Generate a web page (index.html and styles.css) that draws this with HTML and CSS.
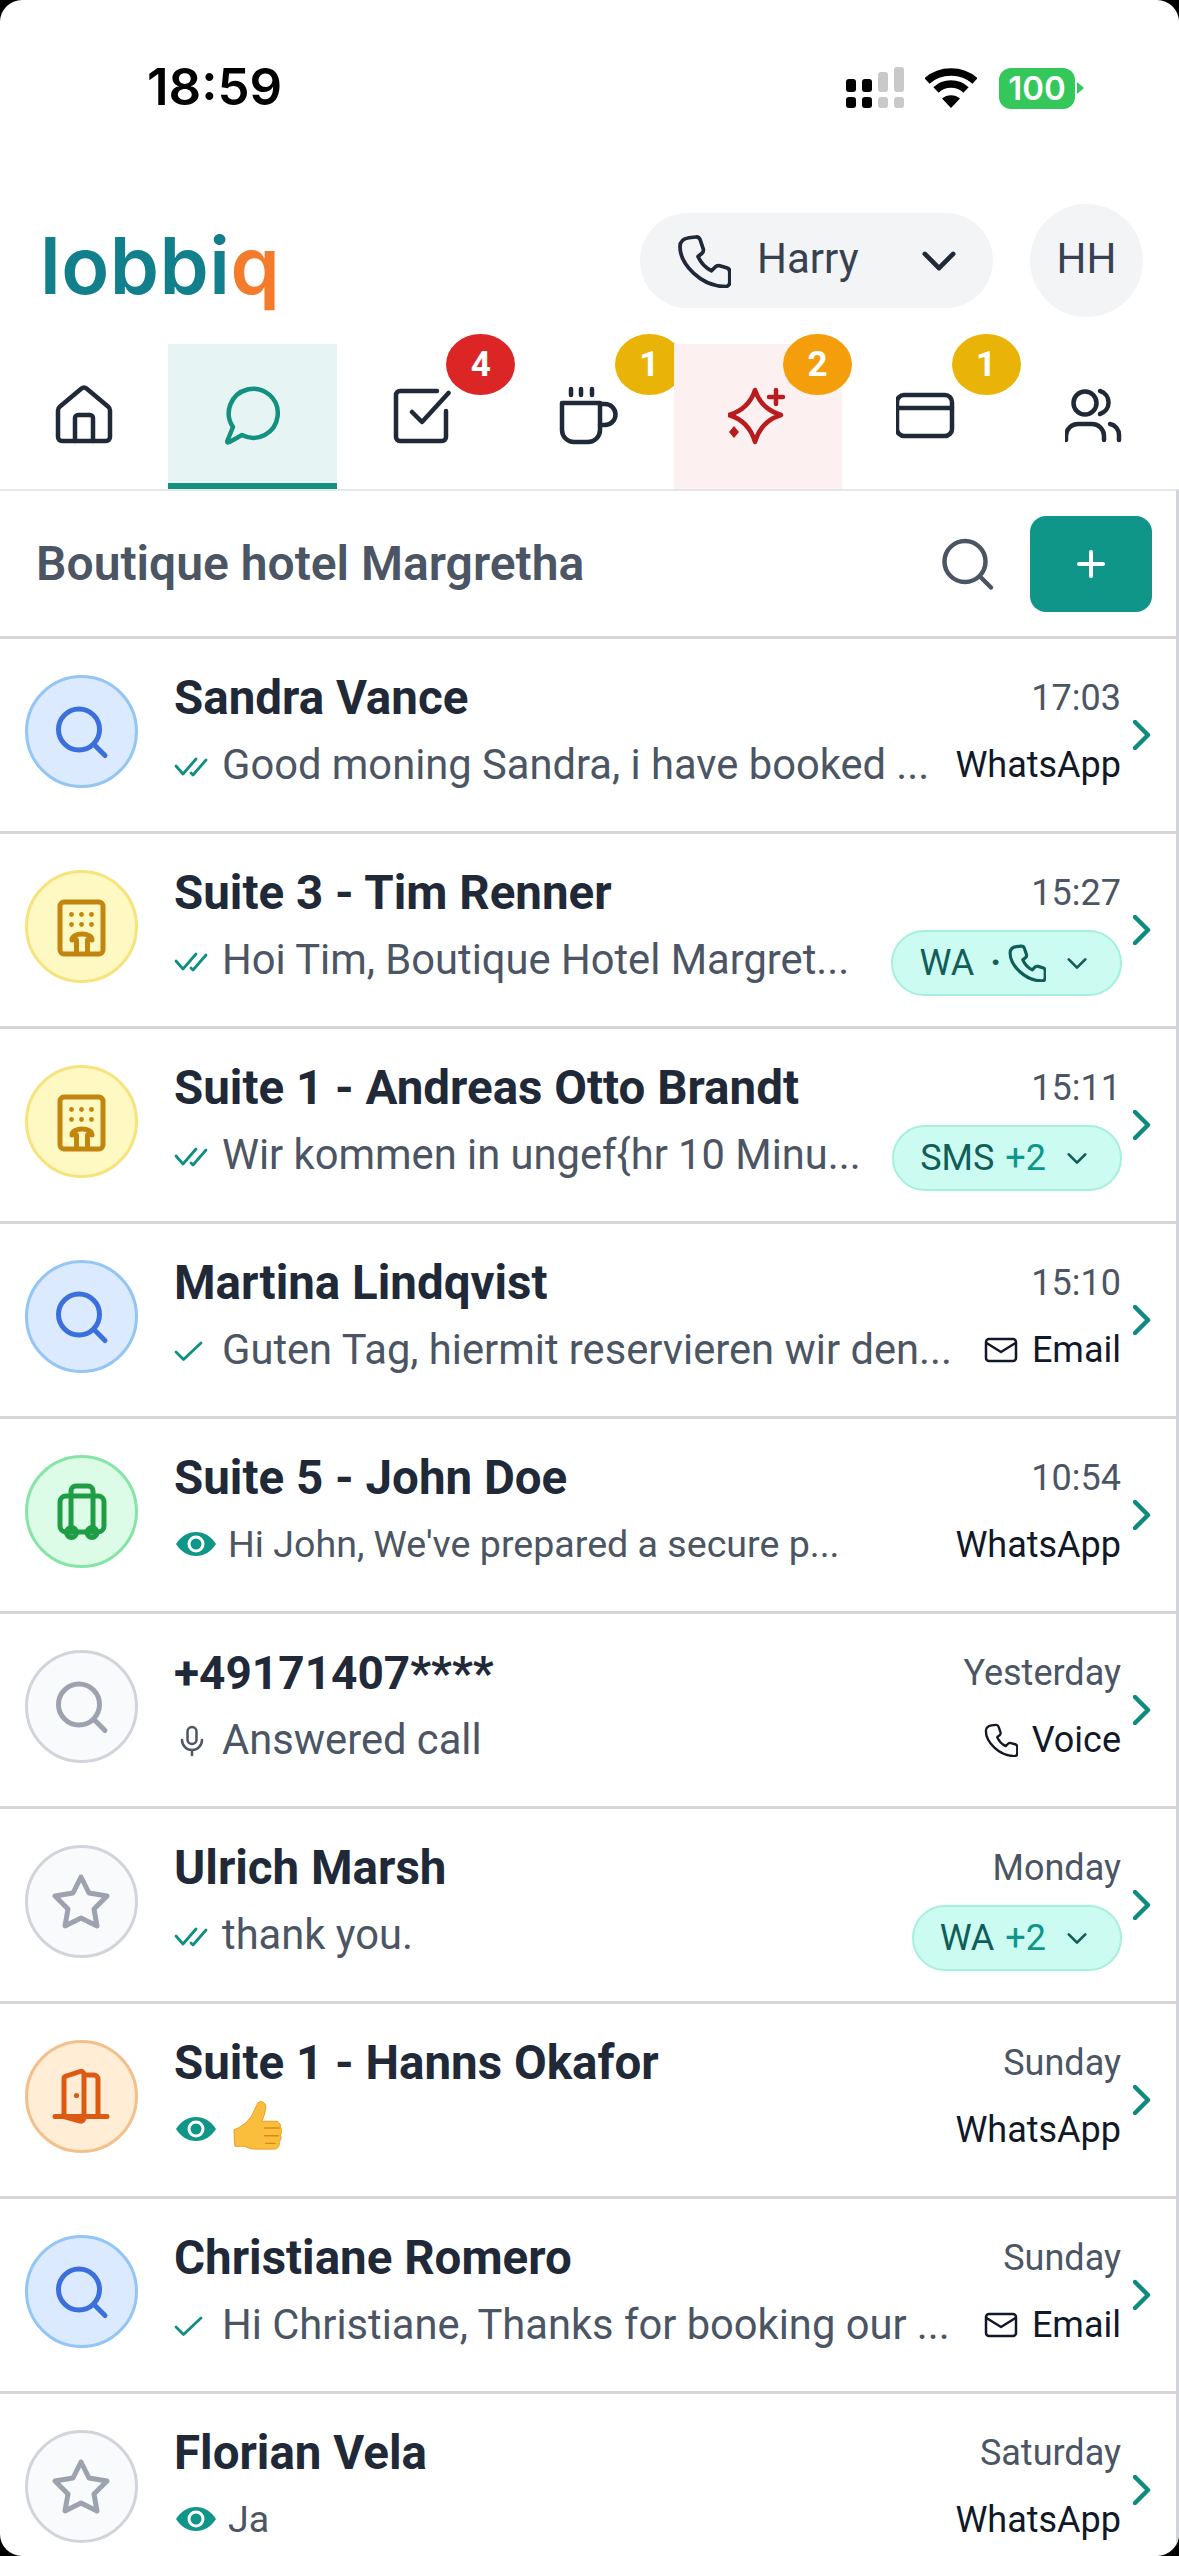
FILE: index.html
```html
<!DOCTYPE html>
<html lang="en">
<head>
<meta charset="utf-8">
<title>lobbiq</title>
<link rel="stylesheet" href="styles.css">
</head>
<body>
<svg class="sprite" xmlns="http://www.w3.org/2000/svg">
  <symbol id="i-search" viewBox="0 0 60 60"><circle cx="27" cy="27.500" r="20.500"/><path d="M42 42.500 53 53.500"/></symbol>
  <symbol id="i-building" viewBox="0 0 60 60"><rect x="8" y="5" width="43" height="52" rx="4"/><path d="M20 43a10 6 0 0 1 20 0M24.500 43V56M35.500 43V56"/><circle class="dot" cx="19.500" cy="17.500" r="2.400"/><circle class="dot" cx="29.500" cy="17.500" r="2.400"/><circle class="dot" cx="39.500" cy="17.500" r="2.400"/><circle class="dot" cx="19.500" cy="27.500" r="2.400"/><circle class="dot" cx="29.500" cy="27.500" r="2.400"/><circle class="dot" cx="39.500" cy="27.500" r="2.400"/></symbol>
  <symbol id="i-case" viewBox="0 0 60 60"><rect x="8" y="14" width="44" height="36" rx="6"/><path d="M19 50V9a5 5 0 0 1 5-5h12a5 5 0 0 1 5 5v41"/><circle cx="19.500" cy="50.500" r="5"/><circle cx="40" cy="50.500" r="5"/></symbol>
  <symbol id="i-star" viewBox="0 0 60 60"><path d="M29 5 37 21 55 24 42 37 45 54 29 46 13 54 16 37 3 24 21 21Z"/></symbol>
  <symbol id="i-door" viewBox="0 0 60 60"><path d="M3 49.500H55M12 49.500V12a3 3 0 0 1 2.500-3L28 4.500a3 3 0 0 1 4 3V51a3 3 0 0 1-4 3L12 49.500M32 8H42a4 4 0 0 1 4 4V49.500"/><circle class="dot" cx="24.500" cy="28.500" r="2.600"/></symbol>
  <symbol id="i-double" viewBox="0 0 34 24"><path d="M2 12 9 20 22 5"/><path d="M17 19 19 21 32 6"/></symbol>
  <symbol id="i-single" viewBox="0 0 30 24"><path d="M2 13 9.500 20.500 27 4"/></symbol>
  <symbol id="i-eye" viewBox="0 0 40 26"><path class="solid" d="M0 13C5 5 12 1 20 1s15 4 20 12c-5 8-12 12-20 12S5 21 0 13Z"/><circle class="ring" cx="20" cy="13" r="7"/></symbol>
  <symbol id="i-mic" viewBox="0 0 26 32"><rect x="8.500" y="2" width="9" height="17" rx="4.500"/><path d="M3 15a10 10 0 0 0 20 0M13 25V30"/></symbol>
  <symbol id="i-phone" viewBox="0 0 36 36"><path d="M8 2.500 12.500 2a3 3 0 0 1 3 2l2 6a3 3 0 0 1-1 3l-2.500 2c2 4.500 5 7.500 9 9.500l2.500-2.500a3 3 0 0 1 3-.8l4.500 1.300a3 3 0 0 1 2.200 3V32a3 3 0 0 1-3 3C16 35 2 20 2 8.500 2 5 4 3 8 2.500Z"/></symbol>
  <symbol id="i-mail" viewBox="0 0 34 28"><rect x="2" y="3" width="30" height="22" rx="3"/><path d="M2.500 7 17 16 31.500 7"/></symbol>
  <symbol id="i-chev" viewBox="0 0 24 14"><path d="M3 2.500 12 11.500 21 2.500"/></symbol>
</svg>

<main class="screen">
  <header class="status">
    <span class="clock">18:59</span>
    <div class="status-icons">
      <svg class="signal" viewBox="0 0 58 42" width="58" height="42">
        <rect x="0" y="12" width="10" height="13" rx="3"/><rect x="16" y="12" width="10" height="13" rx="3"/>
        <rect x="0" y="30" width="10" height="11" rx="3"/><rect x="16" y="30" width="10" height="11" rx="3"/>
        <rect class="off" x="32" y="5" width="10" height="20" rx="3"/><rect class="off" x="48" y="0" width="10" height="25" rx="3"/>
        <rect class="off" x="32" y="30" width="10" height="11" rx="3"/><rect class="off" x="48" y="30" width="10" height="11" rx="3"/>
      </svg>
      <svg class="wifi" viewBox="0 0 52 42" width="52" height="42">
        <path d="M2 14C15 2 37 2 50 14"/><path d="M11 23C19 15 33 15 41 23"/>
        <path class="wifi-dot" d="M26 41 17 31.500C22 27 30 27 35 31.500Z"/>
      </svg>
      <div class="battery"><span class="battery-body">100</span><span class="battery-nub"></span></div>
    </div>
  </header>

  <div class="topbar">
    <div class="logo">lobbi<span class="logo-q">q</span></div>
    <div class="top-actions">
      <button class="caller">
        <svg class="caller-phone" width="54" height="54"><use href="#i-phone"/></svg>
        <span class="caller-name">Harry</span>
        <svg class="caller-chev" width="38" height="22"><use href="#i-chev"/></svg>
      </button>
      <div class="me">HH</div>
    </div>
  </div>

  <nav class="tabs">
    <div class="tab">
      <svg class="tab-icon" viewBox="0 0 60 60"><path d="M27.500 3.500a4 4 0 0 1 5 0L54 21.500a5 5 0 0 1 2 4V52a4 4 0 0 1-4 4H8a4 4 0 0 1-4-4V25.500a5 5 0 0 1 2-4Z"/><path d="M21 56V33a3 3 0 0 1 3-3H36a3 3 0 0 1 3 3V56"/></svg>
    </div>
    <div class="tab tab-active">
      <svg class="tab-icon" viewBox="0 0 60 60"><path d="M19 50A24.500 24.500 0 1 0 10 42L4.500 55.500Q3.500 58 6 57.200Z"/></svg>
    </div>
    <div class="tab">
      <svg class="tab-icon" viewBox="0 0 60 60"><path d="M46 6H9a4 4 0 0 0-4 4V52a4 4 0 0 0 4 4H51a4 4 0 0 0 4-4V26"/><path d="M21 27 31 37 57.500 8"/></svg>
      <span class="badge badge-red">4</span>
    </div>
    <div class="tab">
      <svg class="tab-icon" viewBox="2 0 60 60"><path d="M5 18H43V45a12 12 0 0 1-12 12H17A12 12 0 0 1 5 45Z"/><path d="M43 19h5a10.500 10.500 0 0 1 0 21h-5"/><path d="M14 4v6M24 4v6M35 4v6"/></svg>
      <span class="badge badge-yellow">1</span>
    </div>
    <div class="tab tab-ai">
      <svg class="tab-icon" viewBox="4 0 60 60"><path d="M31 5Q37 24 57 30 37 36 31 57 25 36 5 30 25 24 31 5Z"/><path d="M52 5V19M45 12H59"/><path class="diamond" d="M10 41 15 47 10 53 5 47Z"/></svg>
      <span class="badge badge-orange">2</span>
    </div>
    <div class="tab">
      <svg class="tab-icon" viewBox="2 0 60 60"><rect x="3" y="10" width="55" height="41" rx="7"/><path d="M3 23H58"/></svg>
      <span class="badge badge-yellow">1</span>
    </div>
    <div class="tab">
      <svg class="tab-icon" viewBox="3 0 60 60"><circle cx="23" cy="18" r="11.500"/><path d="M38 6a12 12 0 0 1 0 23"/><path d="M4 55V51A12 12 0 0 1 16 39H30A12 12 0 0 1 42 51V55"/><path d="M48 39a11 11 0 0 1 9 11V55"/></svg>
    </div>
  </nav>

  <section class="panel">
    <div class="toolbar">
      <h1 class="hotel">Boutique hotel Margretha</h1>
      <svg class="tool-search" width="60" height="60"><use href="#i-search"/></svg>
      <button class="add"><svg viewBox="0 0 30 30" width="30" height="30"><path d="M15 3V27M3 15H27"/></svg></button>
    </div>

    <ul class="list">
      <li class="row">
        <div class="avatar av-blue"><svg width="60" height="60"><use href="#i-search"/></svg></div>
        <div class="body">
          <div class="name">Sandra Vance</div>
          <div class="msg"><svg class="tick" width="34" height="24"><use href="#i-double"/></svg><span>Good moning Sandra, i have booked ...</span></div>
        </div>
        <div class="meta"><div class="when">17:03</div><div class="chan">WhatsApp</div></div>
        <svg class="more" viewBox="0 0 18 30" width="18" height="30"><path d="M2 2 15 15 2 28"/></svg>
      </li>
      <li class="row">
        <div class="avatar av-yellow"><svg width="60" height="60"><use href="#i-building"/></svg></div>
        <div class="body">
          <div class="name">Suite 3 - Tim Renner</div>
          <div class="msg"><svg class="tick" width="34" height="24"><use href="#i-double"/></svg><span>Hoi Tim, Boutique Hotel Margret...</span></div>
        </div>
        <div class="meta"><div class="when">15:27</div>
          <div class="pill">WA<span class="pill-dot">·</span><svg class="pill-phone" width="38" height="38"><use href="#i-phone"/></svg><svg class="pill-chev" width="22" height="13"><use href="#i-chev"/></svg></div>
        </div>
        <svg class="more" viewBox="0 0 18 30" width="18" height="30"><path d="M2 2 15 15 2 28"/></svg>
      </li>
      <li class="row">
        <div class="avatar av-yellow"><svg width="60" height="60"><use href="#i-building"/></svg></div>
        <div class="body">
          <div class="name">Suite 1 - Andreas Otto Brandt</div>
          <div class="msg"><svg class="tick" width="34" height="24"><use href="#i-double"/></svg><span>Wir kommen in ungef{hr 10 Minu...</span></div>
        </div>
        <div class="meta"><div class="when">15:11</div>
          <div class="pill">SMS<span class="pill-more">+2</span><svg class="pill-chev" width="22" height="13"><use href="#i-chev"/></svg></div>
        </div>
        <svg class="more" viewBox="0 0 18 30" width="18" height="30"><path d="M2 2 15 15 2 28"/></svg>
      </li>
      <li class="row">
        <div class="avatar av-blue"><svg width="60" height="60"><use href="#i-search"/></svg></div>
        <div class="body">
          <div class="name">Martina Lindqvist</div>
          <div class="msg"><svg class="tick tick-one" width="30" height="24"><use href="#i-single"/></svg><span>Guten Tag, hiermit reservieren wir den...</span></div>
        </div>
        <div class="meta"><div class="when">15:10</div><div class="chan"><svg class="chan-icon" width="34" height="28"><use href="#i-mail"/></svg>Email</div></div>
        <svg class="more" viewBox="0 0 18 30" width="18" height="30"><path d="M2 2 15 15 2 28"/></svg>
      </li>
      <li class="row">
        <div class="avatar av-green"><svg width="60" height="60"><use href="#i-case"/></svg></div>
        <div class="body">
          <div class="name">Suite 5 - John Doe</div>
          <div class="msg msg-seen"><svg class="eye" width="40" height="26"><use href="#i-eye"/></svg><span>Hi John, We've prepared a secure p...</span></div>
        </div>
        <div class="meta"><div class="when">10:54</div><div class="chan">WhatsApp</div></div>
        <svg class="more" viewBox="0 0 18 30" width="18" height="30"><path d="M2 2 15 15 2 28"/></svg>
      </li>
      <li class="row">
        <div class="avatar av-gray"><svg width="60" height="60"><use href="#i-search"/></svg></div>
        <div class="body">
          <div class="name name-phone">+49171407****</div>
          <div class="msg"><svg class="mic" width="26" height="32"><use href="#i-mic"/></svg><span>Answered call</span></div>
        </div>
        <div class="meta"><div class="when">Yesterday</div><div class="chan"><svg class="chan-icon" width="34" height="34"><use href="#i-phone"/></svg>Voice</div></div>
        <svg class="more" viewBox="0 0 18 30" width="18" height="30"><path d="M2 2 15 15 2 28"/></svg>
      </li>
      <li class="row">
        <div class="avatar av-gray"><svg width="60" height="60"><use href="#i-star"/></svg></div>
        <div class="body">
          <div class="name">Ulrich Marsh</div>
          <div class="msg"><svg class="tick" width="34" height="24"><use href="#i-double"/></svg><span>thank you.</span></div>
        </div>
        <div class="meta"><div class="when">Monday</div>
          <div class="pill">WA<span class="pill-more">+2</span><svg class="pill-chev" width="22" height="13"><use href="#i-chev"/></svg></div>
        </div>
        <svg class="more" viewBox="0 0 18 30" width="18" height="30"><path d="M2 2 15 15 2 28"/></svg>
      </li>
      <li class="row">
        <div class="avatar av-orange"><svg width="60" height="60"><use href="#i-door"/></svg></div>
        <div class="body">
          <div class="name">Suite 1 - Hanns Okafor</div>
          <div class="msg msg-seen"><svg class="eye" width="40" height="26"><use href="#i-eye"/></svg>
            <svg class="thumb" viewBox="0 0 52 54" width="50" height="54"><path class="thumb-hand" d="M2 30c8-3 14-8 18-14 3-5 5-11 7-14 3-3 8-1 8 4 0 5-2 11-4 15h13c5 0 7 3 6 6 3 2 3 6 0 8 2 3 1 6-1 7 1 4-1 8-5 8H24c-5 0-8-2-12-3H3Z"/><path class="thumb-line" d="M34 28H49M34 36H48M35 44H45"/></svg>
          </div>
        </div>
        <div class="meta"><div class="when">Sunday</div><div class="chan">WhatsApp</div></div>
        <svg class="more" viewBox="0 0 18 30" width="18" height="30"><path d="M2 2 15 15 2 28"/></svg>
      </li>
      <li class="row">
        <div class="avatar av-blue"><svg width="60" height="60"><use href="#i-search"/></svg></div>
        <div class="body">
          <div class="name">Christiane Romero</div>
          <div class="msg"><svg class="tick tick-one" width="30" height="24"><use href="#i-single"/></svg><span>Hi Christiane, Thanks for booking our ...</span></div>
        </div>
        <div class="meta"><div class="when">Sunday</div><div class="chan"><svg class="chan-icon" width="34" height="28"><use href="#i-mail"/></svg>Email</div></div>
        <svg class="more" viewBox="0 0 18 30" width="18" height="30"><path d="M2 2 15 15 2 28"/></svg>
      </li>
      <li class="row">
        <div class="avatar av-gray"><svg width="60" height="60"><use href="#i-star"/></svg></div>
        <div class="body">
          <div class="name">Florian Vela</div>
          <div class="msg msg-seen"><svg class="eye" width="40" height="26"><use href="#i-eye"/></svg><span>Ja</span></div>
        </div>
        <div class="meta"><div class="when">Saturday</div><div class="chan">WhatsApp</div></div>
        <svg class="more" viewBox="0 0 18 30" width="18" height="30"><path d="M2 2 15 15 2 28"/></svg>
      </li>
    </ul>
  </section>
</main>
</body>
</html>
```
FILE: styles.css
```css
* { box-sizing: border-box; }
html { background: #000; }
body { margin: 0; font-family: Roboto, "Liberation Sans", sans-serif; }
.sprite { display: none; }
symbol { overflow: visible; }

.screen {
  width: 1179px;
  height: 2556px;
  overflow: hidden;
  background: #fff;
  border-radius: 22px;
  display: flex;
  flex-direction: column;
}

/* status bar */
.status {
  height: 176px;
  flex: none;
  display: flex;
  justify-content: space-between;
  align-items: flex-start;
  padding: 58px 95px 0 147px;
}
.clock { font-family: Inter, sans-serif; font-weight: 600; font-size: 51px; line-height: 58px; color: #000; }
.status-icons { display: flex; align-items: center; gap: 21px; padding-top: 9px; }
.signal rect { fill: #000; }
.signal .off { fill: #c9c9c9; }
.wifi path { fill: none; stroke: #000; stroke-width: 7.500; }
.wifi .wifi-dot { fill: #000; stroke: none; }
.battery { display: flex; align-items: center; gap: 2px; margin-left: 1px; }
.battery-body {
  width: 76px; height: 41px; border-radius: 12px; background: #34c759;
  color: #fff; font-family: Inter, sans-serif; font-weight: 600; font-size: 33px; line-height: 41px; text-align: center;
}
.battery-nub { width: 0; height: 0; border-left: 7px solid #34c759; border-top: 6px solid transparent; border-bottom: 6px solid transparent; }

/* top bar */
.topbar {
  height: 168px;
  flex: none;
  display: flex;
  justify-content: space-between;
  align-items: flex-start;
  padding: 28px 36px 0 40px;
}
.logo { font-family: Inter, sans-serif; font-weight: 600; font-size: 79px; line-height: 100px; color: #12808c; padding-top: 11px; letter-spacing: .5px; }
.logo-q { color: #f47b2b; }
.top-actions { display: flex; align-items: center; gap: 37px; }
.caller {
  width: 353px; height: 95px; border: 0; border-radius: 48px; background: #f3f4f6;
  display: flex; align-items: center; padding: 0 35px 0 37px; font: inherit; color: #1f2937;
}
.caller-phone { fill: none; stroke: #1f2937; stroke-width: 2.500; stroke-linejoin: round; }
.caller-name { font-size: 42px; margin-left: 26px; padding-bottom: 5px; flex: 1; text-align: left; color: #374151; }
.caller-chev { fill: none; stroke: #1f2937; stroke-width: 3; stroke-linecap: round; stroke-linejoin: round; }
.me {
  width: 113px; height: 113px; border-radius: 50%; background: #f3f4f6; padding-bottom: 5px;
  display: flex; align-items: center; justify-content: center; font-size: 42px; color: #374151;
}

/* tabs */
.tabs { flex: none; height: 145px; display: grid; grid-template-columns: repeat(7, 1fr); }
.tab { position: relative; display: flex; align-items: center; justify-content: center; padding-bottom: 3px; }
.tab-icon { width: 60px; height: 60px; fill: none; stroke: #1f2937; stroke-width: 4.500; stroke-linecap: round; stroke-linejoin: round; }
.tab-active { background: #e6f4f3; border-bottom: 6px solid #13917f; padding-bottom: 0; padding-top: 2px; }
.tab-active .tab-icon { stroke: #13917f; }
.tab-ai { background: #fdf0f1; }
.tab-ai .tab-icon { stroke: #b91c1c; }
.tab-ai .diamond { fill: #b91c1c; stroke: none; }
.badge {
  position: absolute; top: -10px; right: -10px; width: 69px; height: 61px; border-radius: 50%;
  display: flex; align-items: center; justify-content: center;
  color: #fff; font-weight: 700; font-size: 35px;
}
.badge-red { background: #dc2626; }
.badge-yellow { background: #e9b308; }
.badge-orange { background: #f59e0b; }

/* panel */
.panel { flex: 1; min-height: 0; border-top: 2px solid #e5e7eb; border-right: 3px solid #d1d5db; }
.toolbar {
  height: 148px; display: flex; align-items: center; padding: 0 24px 0 36px; border-bottom: 3px solid #d4d6da;
}
.hotel { flex: 1; margin: 0; font-size: 48px; font-weight: 600; color: #4b5563; }
.tool-search { fill: none; stroke: #4b5563; stroke-width: 4.500; stroke-linecap: round; margin-right: 32px; }
.add {
  width: 122px; height: 96px; border: 0; padding: 0; border-radius: 16px; background: #0f9688;
  display: flex; align-items: center; justify-content: center;
}
.add path { fill: none; stroke: #fff; stroke-width: 4; stroke-linecap: round; }

/* list */
.list { list-style: none; margin: 0; padding: 0; }
.row {
  height: 195px; display: flex; align-items: flex-start; padding: 36px 25px 0 25px;
  border-bottom: 3px solid #d4d6da;
}
.avatar {
  flex: none; width: 113px; height: 113px; border-radius: 50%; border: 3px solid;
  display: flex; align-items: center; justify-content: center;
  fill: none; stroke: currentColor; stroke-width: 5; stroke-linecap: round; stroke-linejoin: round;
}
.av-blue { background: #dbeafe; border-color: #93c5f5; color: #3b6fdc; }
.av-yellow { background: #fef9c3; border-color: #f7e37e; color: #c2860f; }
.av-green { background: #dcfce7; border-color: #86e5a6; color: #1f9d45; }
.av-gray { background: #f9fafb; border-color: #d1d5db; color: #9ca3af; }
.av-orange { background: #ffedd5; border-color: #f3c08c; color: #dd5a14; }
.dot { fill: currentColor; stroke: none; }

.body { flex: 1; min-width: 0; margin-left: 36px; margin-top: -7px; white-space: nowrap; }
.name { font-size: 47.500px; line-height: 60px; font-weight: 700; color: #1f2937; }
.name-phone { font-size: 46px; }
.msg { display: flex; align-items: center; height: 66px; margin-top: 3px; font-size: 41.700px; color: #4b5563; }
.msg-seen { font-size: 37.600px; gap: 12px; }
.tick { flex: none; margin-right: 14px; margin-top: 4px; fill: none; stroke: #0f8f82; stroke-width: 2.800; stroke-linecap: round; stroke-linejoin: round; }
.tick-one { margin-right: 18px; }
.eye { flex: none; margin-left: 2px; }
.solid { fill: #0f9688; }
.ring { fill: none; stroke: #fff; stroke-width: 3; }
.mic { flex: none; margin: 3px 17px 0 5px; fill: none; stroke: #4b5563; stroke-width: 2.500; stroke-linecap: round; }
.thumb { flex: none; margin-left: 4px; margin-top: -4px; }
.thumb-hand { fill: #fbbe3c; stroke: #e99b1c; stroke-width: 1; }
.thumb-line { fill: none; stroke: #d98a14; stroke-width: 1.500; stroke-linecap: round; }

.meta { flex: none; margin-top: -7px; display: flex; flex-direction: column; align-items: flex-end; white-space: nowrap; }
.when { font-size: 36px; line-height: 60px; color: #4b5563; }
.chan { display: flex; align-items: center; gap: 14px; height: 66px; margin-top: 4px; font-size: 36px; color: #111827; }
.chan-icon { fill: none; stroke: #111827; stroke-width: 2.500; stroke-linecap: round; stroke-linejoin: round; }
.pill {
  display: flex; align-items: center; height: 66px; margin-top: 7px; margin-right: -1px; padding: 0 32px 0 26px;
  border: 2px solid #a5efdd; border-radius: 33px; background: #ccfbf1;
  font-size: 36px; color: #115e59;
}
.pill-dot { margin: 0 7px 0 16px; font-weight: 700; }
.pill-phone { fill: none; stroke: #115e59; stroke-width: 3; stroke-linejoin: round; }
.pill-more { color: #0f9688; margin-left: 11px; }
.pill-chev { margin-left: 20px; fill: none; stroke: #115e59; stroke-width: 3; stroke-linecap: round; stroke-linejoin: round; }
.more { flex: none; margin: 45px 0 0 12px; fill: none; stroke: #0f8a7e; stroke-width: 4.500; stroke-linecap: round; stroke-linejoin: round; }
```
